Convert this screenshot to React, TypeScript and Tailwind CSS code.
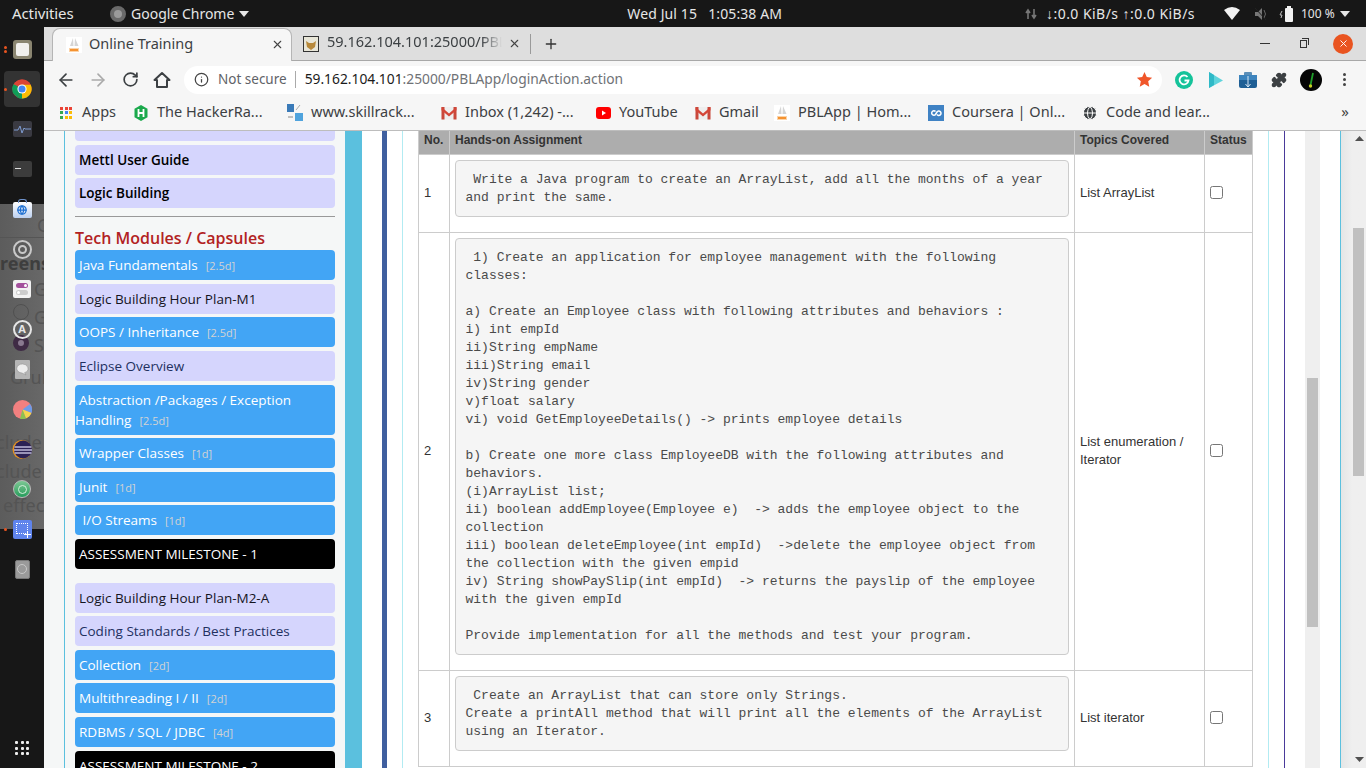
import { ArrowLeft, ArrowRight, RotateCw, Info, Puzzle, X, Plus, Globe } from "lucide-react";

const ui = "font-['Noto_Sans',sans-serif]";

function ChromeLogo({ size = 28 }: { size?: number }) {
  return (
    <svg width={size} height={size} viewBox="0 0 48 48">
      <circle cx="24" cy="24" r="23" fill="#db4437" />
      <path d="M24 24 L44 36 A23 23 0 0 1 14 44.7 Z" fill="#0f9d58" />
      <path d="M24 24 L4 12 A23 23 0 0 0 4 36 L14 44.7 Z" fill="#0f9d58" />
      <path d="M24 13 H44.5 A23 23 0 0 1 34 44.7 L24 47 Z" fill="#fbbc05" />
      <path d="M24 13 L4.5 13 A23 23 0 0 1 44.5 13 Z" fill="#db4437" />
      <circle cx="24" cy="24" r="11" fill="#fff" />
      <circle cx="24" cy="24" r="8.5" fill="#4285f4" />
    </svg>
  );
}

function PblIcon() {
  return (
    <svg width="16" height="16" viewBox="0 0 16 16">
      <rect width="16" height="16" fill="#fff" />
      <path d="M4 9 L7 1 L7.500 9 Z M8.500 9 L9 1 L12.500 9 Z" fill="#d5d5d5" />
      <rect x="3" y="11" width="10" height="4" fill="#fbd3a8" />
      <rect x="4" y="12" width="8" height="2" fill="#f59331" />
    </svg>
  );
}

function GmailIcon() {
  return (
    <svg width="16" height="14" viewBox="0 0 16 14">
      <rect x="0.5" y="1" width="15" height="12.5" fill="#eee" />
      <rect x="0.5" y="1" width="3" height="12.5" fill="#c9483b" />
      <rect x="12.5" y="1" width="3" height="12.5" fill="#c9483b" />
      <path d="M0.5 1 L8 7.5 L15.5 1 V4.2 L8 10.5 L0.5 4.2 Z" fill="#d44638" />
    </svg>
  );
}

function Bookmark({ icon, label, w }: { icon: React.ReactNode; label: string; w: string }) {
  return (
    <div className={`flex items-center ${w}`}>
      <span className="flex w-4 h-4 items-center justify-center shrink-0">{icon}</span>
      <span className="ml-2 -mt-[1px] text-[14.5px] text-[#3c4043] whitespace-nowrap">{label}</span>
    </div>
  );
}

function TopBar() {
  return (
    <div className={`flex items-center h-[27px] bg-[#171717] text-[#e6e6e6] text-[14px] ${ui} relative shrink-0`}>
      <span className="ml-3 w-[98px] text-[15px] tracking-[-0.1px]">Activities</span>
      <span className="w-[16px] h-[16px] rounded-full bg-[#9a9a9a] border-[4px] border-[#6a6a6a]" />
      <span className="ml-[5px]">Google Chrome</span>
      <svg width="10" height="6" viewBox="0 0 10 6" className="ml-[5px]"><path d="M0 0h10L5 6z" fill="#e6e6e6" /></svg>
      <span className="ml-[378px] whitespace-pre tracking-[0.1px]">Wed Jul 15   1:05:38 AM</span>
      <svg width="12" height="12" viewBox="0 0 12 12" className="ml-[243px]">
        <path d="M3 11V3M1 5l2-3 2 3M9 1v8M7 7l2 3 2-3" stroke="#777" strokeWidth="1.6" fill="none" />
      </svg>
      <span className="ml-[9px] text-[14px] tracking-[0.45px] whitespace-pre">↓:0.0 KiB/s ↑:0.0 KiB/s</span>
      <svg width="16" height="13" viewBox="0 0 16 13" className="ml-[29px]"><path d="M0 3 Q8 -3 16 3 L8 13z" fill="#f2f2f2" /></svg>
      <svg width="14" height="14" viewBox="0 0 14 14" className="ml-[14px]">
        <path d="M1 5h3l4-4v12l-4-4H1z" fill="#777" /><path d="M10 3q3 4 0 8" stroke="#666" fill="none" /><path d="M1 1l11 12" stroke="#222" />
      </svg>
      <svg width="18" height="18" viewBox="0 0 18 18" className="ml-[11px]">
        <path d="M3 6l-2 4h2l-1 3" stroke="#bbb" fill="none" />
        <rect x="6" y="3" width="8" height="14" rx="1" fill="#f2f2f2" />
        <rect x="8" y="1" width="4" height="2" fill="#f2f2f2" />
      </svg>
      <span className="ml-[4px] text-[12px]">100 %</span>
      <svg width="10" height="6" viewBox="0 0 10 6" className="ml-[5px]"><path d="M0 0h10L5 6z" fill="#e6e6e6" /></svg>
    </div>
  );
}

function Dock() {
  return (
    <div className="relative flex flex-col items-center w-[44px] shrink-0 bg-[#171717] pt-[2px] overflow-hidden">
      {/* window behind the translucent dock */}
      <div className={`absolute left-0 top-[177px] w-[44px] h-[325px] bg-gradient-to-r from-[#5c5c5c] to-[#686868] text-[#545454] text-[18px] overflow-hidden ${ui}`}>
        <div className="absolute left-0 top-[33px] w-[44px] h-px bg-[#555]" />
        <span className="absolute left-[37px] top-[8px]">G</span>
        <span className="absolute left-0 top-[46px] font-bold text-[#3e3e3e] whitespace-nowrap">reensh</span>
        <span className="absolute left-[34px] top-[72px]">G</span>
        <span className="absolute left-[13px] top-[100px] w-[16px] h-[16px] rounded-full border border-[#505050]" />
        <span className="absolute left-[34px] top-[100px]">G</span>
        <span className="absolute left-[13px] top-[131px] w-[16px] h-[16px] rounded-full bg-[#8a7a90] border-[5px] border-[#3f2b45]" />
        <span className="absolute left-[34px] top-[128px]">S</span>
        <span className="absolute left-[10px] top-[160px]">Grub</span>
        <span className="absolute left-[-4px] top-[225px] whitespace-nowrap">clude p</span>
        <span className="absolute left-[-4px] top-[254px] whitespace-nowrap">clude t</span>
        <span className="absolute left-[3px] top-[288px] whitespace-nowrap">effect</span>
      </div>
      <div className="relative flex flex-col items-center w-full h-full">
        <Slot dots={2}>
          <div className="w-[19px] h-[19px] rounded-[3px] bg-[#8a8570] p-[3px]"><div className="w-full h-full rounded-[2px] bg-[#f1f0ed]" /></div>
        </Slot>
        <Slot dots={1} active>
          <ChromeLogo size={20} />
        </Slot>
        <Slot>
          <div className="flex items-center justify-center w-[19px] h-[16px] rounded-[2px] bg-[#3a3a42]">
            <svg width="17" height="10" viewBox="0 0 17 10"><path d="M0 6h4l2-4 2 7 2-5 1 1h6" stroke="#7e9bd0" fill="none" /></svg>
          </div>
        </Slot>
        <Slot>
          <div className="w-[19px] h-[16px] rounded-[2px] bg-[#3c3c3c] pl-[2px] pt-[3px]"><div className="w-[6px] h-[5px] border-b border-[#ddd]" /></div>
        </Slot>
        <Slot>
          <div className="relative flex items-center justify-center w-[19px] h-[16px] mt-[2px] rounded-[2px] bg-gradient-to-b from-[#fff] to-[#bcd0f0]">
            <div className="absolute left-[5px] top-[-3px] w-[9px] h-[4px] rounded-t-[3px] border border-b-0 border-[#6f93cc]" />
            <Globe size={10} color="#1d6fd1" strokeWidth={3} />
          </div>
        </Slot>
        <Slot>
          <div className="flex items-center justify-center w-[19px] h-[19px] rounded-full border-2 border-[#c9c9c9] bg-[#5c5c5c]">
            <div className="w-[9px] h-[9px] rounded-full border-2 border-[#c9c9c9]" />
          </div>
        </Slot>
        <Slot>
          <div className="flex flex-col justify-center gap-[2px] w-[18px] h-[18px] rounded-[2px] bg-[#f2f2f2] px-[3px]">
            <div className="flex justify-end h-[5px] rounded-full bg-[#a3509c] p-px"><span className="w-[3px] h-[3px] rounded-full bg-white" /></div>
            <div className="flex h-[5px] rounded-full bg-[#ccc] p-px"><span className="w-[3px] h-[3px] rounded-full bg-white" /></div>
          </div>
        </Slot>
        <Slot>
          <div className="flex items-center justify-center w-[19px] h-[19px] rounded-full border-2 border-[#e6e6e6] text-[11px] font-bold text-[#e6e6e6] font-['Noto_Sans',sans-serif]">A</div>
        </Slot>
        <Slot>
          <div className="flex items-center justify-center w-[15px] h-[19px] rounded-[1px] bg-[#b5b5b5]">
            <svg width="13" height="13" viewBox="0 0 13 13"><path d="M6.500 1a5.500 4.500 0 0 1 2 8.700L10 12 6 10A5.500 4.500 0 0 1 6.500 1z" fill="#eee" stroke="#888" strokeWidth=".5" /></svg>
          </div>
        </Slot>
        <Slot>
          <svg width="19" height="19" viewBox="0 0 19 19">
            <circle cx="9.5" cy="9.5" r="9.5" fill="#f28080" />
            <path d="M9.5 9.5 L17 4 A9.5 9.5 0 0 1 18.5 13 Z" fill="#6f9be8" />
            <path d="M9.5 9.5 L18.5 13 A9.5 9.5 0 0 1 13 18.5 Z" fill="#f3d64e" />
            <path d="M9.5 9.5 L13 18.5 A9.5 9.5 0 0 1 7 18.7 Z" fill="#8cc152" />
          </svg>
        </Slot>
        <Slot>
          <svg width="21" height="19" viewBox="0 0 21 19">
            <circle cx="10" cy="9.5" r="9.5" fill="#e8951f" />
            <circle cx="11" cy="9.5" r="9" fill="#2c2255" />
            <path d="M2.5 6h17v2h-17zM2 9h18v2H2zM2.5 12h17v2h-17z" fill="#9a94b8" />
          </svg>
        </Slot>
        <Slot>
          <div className="flex items-center justify-center w-[18px] h-[18px] rounded-full bg-gradient-to-b from-[#7bc894] to-[#1f9d5c] border border-[#bbb]">
            <div className="w-[9px] h-[9px] rounded-full border border-[#d5efdc]" />
          </div>
        </Slot>
        <Slot dots={1}>
          <div className="relative w-[19px] h-[19px] rounded-[2px] bg-[#5f84ec] p-[3px]">
            <div className="w-[12px] h-[11px] border border-dotted border-white" />
            <svg width="7" height="7" viewBox="0 0 7 7" className="absolute right-[1px] bottom-[1px]"><path d="M3.500 0v7M0 3.500h7" stroke="#fff" /></svg>
          </div>
        </Slot>
        <Slot>
          <div className="flex items-center justify-center w-[15px] h-[19px] rounded-[2px] bg-[#9a9a9a] border border-[#777]">
            <div className="w-[10px] h-[10px] rounded-full border border-[#c8c8c8]" />
          </div>
        </Slot>
        <div className="mt-auto mb-[13px] grid grid-cols-3 gap-[2.5px]">
          {Array.from({ length: 9 }).map((_, i) => (
            <span key={i} className="w-[3px] h-[3px] bg-[#eee] rounded-[1px]" />
          ))}
        </div>
      </div>
    </div>
  );
}

function Slot({ children, dots = 0, active }: { children: React.ReactNode; dots?: number; active?: boolean }) {
  return (
    <div className="relative flex items-center justify-center w-full h-10 shrink-0">
      {active && <div className="absolute left-[4px] top-[2px] w-[36px] h-[36px] rounded-[4px] bg-[#333]" />}
      {dots > 0 && (
        <div className="absolute left-[4px] top-0 bottom-0 flex flex-col justify-center gap-[1px]">
          {Array.from({ length: dots }).map((_, i) => (
            <span key={i} className="w-[3px] h-[3px] rounded-full bg-[#e95420]" />
          ))}
        </div>
      )}
      <div className="relative">{children}</div>
    </div>
  );
}

function BrowserChrome() {
  return (
    <div className={`shrink-0 ${ui}`}>
      <div className="relative flex items-end h-[34px] bg-[#dedede] border-b border-[#a8a8a8] pl-[8px]">
        <div className="relative flex items-center w-[240px] h-[33px] -mb-px bg-[#f6f6f6] rounded-t-[8px] border border-b-0 border-[#b5b5b5] pl-[13px] pr-[7px]">
          <PblIcon />
          <span className="ml-[7px] -mt-[3px] text-[14.5px] text-[#3c4043] whitespace-nowrap">Online Training</span>
          <X size={13} color="#444" strokeWidth={2} className="ml-auto -mt-[1px]" />
        </div>
        <div className="flex items-center h-[33px] pl-[11px] flex-1">
          <div className="flex w-4 h-4 items-center justify-center bg-[#e8e6d8] border border-[#333]">
            <svg width="14" height="14" viewBox="0 0 14 14"><path d="M2 4l3 2h4l3-2-1 6-4 3-4-3z" fill="#b8893a" /></svg>
          </div>
          <span className="ml-[8px] -mt-[3px] w-[175px] overflow-hidden text-[14.5px] text-[#3c4043] whitespace-nowrap [mask-image:linear-gradient(to_right,black_88%,transparent)]">59.162.104.101:25000/PBL</span>
          <X size={13} color="#444" strokeWidth={2} className="ml-[6px]" />
          <span className="ml-[9px] w-px h-[20px] bg-[#9a9a9a]" />
          <Plus size={16} color="#333" strokeWidth={2} className="ml-[12px]" />
          <span className="ml-auto w-[10px] h-px bg-[#333]" />
          <span className="relative ml-[30px] w-[7px] h-[8px] border border-[#333]">
            <span className="absolute left-[1px] top-[-3px] w-[7px] h-[7px] border-t border-r border-[#333]" />
          </span>
          <span className="ml-[26px] mr-[13px] flex items-center justify-center w-[20px] h-[20px] rounded-full bg-[#e95420]">
            <X size={11} color="#fff" strokeWidth={2} />
          </span>
        </div>
      </div>
      <div className="flex items-center h-[37px] bg-[#f6f6f6] pl-3 pr-[11px]">
        <ArrowLeft size={20} color="#3c4043" strokeWidth={2} />
        <ArrowRight size={20} color="#aaa" strokeWidth={2} className="ml-[12px]" />
        <RotateCw size={17} color="#3c4043" strokeWidth={2.4} className="ml-[14px]" />
        <svg width="18" height="18" viewBox="0 0 18 18" className="ml-[14px]">
          <path d="M9 2 L16.5 9 H14 V16 H4 V9 H1.5 Z" fill="none" stroke="#3c4043" strokeWidth="2" strokeLinejoin="round" />
        </svg>
        <div className="flex items-center w-[978px] h-[28px] ml-[13px] rounded-full bg-white pl-[10px] pr-[10px]">
          <Info size={15} color="#444" strokeWidth={2} />
          <span className="ml-[9px] -mt-[1px] text-[13.5px] text-[#5f6368] whitespace-nowrap">Not secure</span>
          <span className="ml-[8px] w-px h-[17px] bg-[#aaa]" />
          <span className="ml-[9px] -mt-[1px] text-[13.8px] text-[#6f7276] whitespace-nowrap">
            <span className="text-[#1b1b1b]">59.162.104.101</span>:25000/PBLApp/loginAction.action
          </span>
          <svg width="17" height="17" viewBox="0 0 24 24" className="ml-auto mr-[-1px]">
            <path d="M12 1.5l3.2 7 7.6.9-5.6 5.200 1.5 7.600L12 18.400l-6.700 3.800 1.500-7.600L1.200 9.400l7.600-.9z" fill="#f0562a" />
          </svg>
        </div>
        <svg width="18" height="18" viewBox="0 0 18 18" className="ml-[13px]">
          <circle cx="9" cy="9" r="9" fill="#15c39a" />
          <path d="M12.5 6 A4.5 4.5 0 1 0 13.5 9.5 H9.5" fill="none" stroke="#fff" strokeWidth="1.8" />
        </svg>
        <svg width="16" height="18" viewBox="0 0 16 18" className="ml-[15px]">
          <path d="M1 1 L15 9.5 L1 17z" fill="#5fd4dc" /><path d="M1 1 L6 4 V14 L1 17z" fill="#2fb9c7" />
        </svg>
        <svg width="18" height="16" viewBox="0 0 18 16" className="ml-[15px]">
          <rect x="0" y="3" width="18" height="13" rx="2" fill="#1f5f95" />
          <rect x="5" y="0" width="8" height="4" rx="1" fill="#5c8fb8" />
          <rect x="0" y="3" width="18" height="5" fill="#3d84bd" />
          <path d="M9 4v11M6.500 12L9 15l2.500-3" stroke="#d8e8f5" fill="none" />
        </svg>
        <Puzzle size={16} color="#3c4043" fill="#3c4043" className="ml-[14px]" />
        <span className="relative ml-[13px] w-[22px] h-[22px] rounded-full bg-[#050505]">
          <svg width="22" height="22" viewBox="0 0 22 22">
            <path d="M13 4 L10.5 16" stroke="#1f9d2a" strokeWidth="1.8" />
            <circle cx="10.5" cy="17" r="1.7" fill="#c6cf22" />
          </svg>
        </span>
        <span className="ml-[21px] flex flex-col gap-[2px]">
          <span className="w-[3px] h-[3px] rounded-full bg-[#444]" />
          <span className="w-[3px] h-[3px] rounded-full bg-[#444]" />
          <span className="w-[3px] h-[3px] rounded-full bg-[#444]" />
        </span>
      </div>
      <div className="flex items-center h-[33px] bg-[#f6f6f6] border-b border-[#bdbdbd] pl-[14px] pr-[17px] pb-[3px]">
        <Bookmark
          w="w-[75px]"
          label="Apps"
          icon={
            <span className="grid grid-cols-3 gap-[1.5px]">
              {["bg-[#ea4335]", "bg-[#ea4335]", "bg-[#ea4335]", "bg-[#34a853]", "bg-[#4285f4]", "bg-[#fbbc05]", "bg-[#34a853]", "bg-[#fbbc05]", "bg-[#fbbc05]"].map((c, i) => (
                <span key={i} className={`w-[3px] h-[3px] ${c}`} />
              ))}
            </span>
          }
        />
        <Bookmark
          w="w-[154px]"
          label="The HackerRa..."
          icon={
            <svg width="14" height="16" viewBox="0 0 14 16"><path d="M7 0 L13.5 3.800 V12.200 L7 16 L.5 12.200 V3.800Z" fill="#1ba94c" /><path d="M4.500 4v8M9.500 4v8M4.500 8h5" stroke="#fff" strokeWidth="1.8" /></svg>
          }
        />
        <Bookmark
          w="w-[154px]"
          label="www.skillrack..."
          icon={
            <svg width="16" height="18" viewBox="0 0 16 18"><rect x="0" y="0" width="7" height="8" fill="#3a7ab8" /><rect x="8" y="9" width="8" height="8" fill="#4fa3dd" /><path d="M9 6l4-5" stroke="#aaa" /><path d="M1 13h5" stroke="#888" /></svg>
          }
        />
        <Bookmark w="w-[154px]" label="Inbox (1,242) -..." icon={<GmailIcon />} />
        <Bookmark
          w="w-[100px]"
          label="YouTube"
          icon={
            <svg width="15" height="12" viewBox="0 0 15 12"><rect width="15" height="12" rx="3" fill="#f00" /><path d="M6 3.500v5l4-2.500z" fill="#fff" /></svg>
          }
        />
        <Bookmark w="w-[79px]" label="Gmail" icon={<GmailIcon />} />
        <Bookmark w="w-[154px]" label="PBLApp | Hom..." icon={<PblIcon />} />
        <Bookmark
          w="w-[154px]"
          label="Coursera | Onl..."
          icon={
            <svg width="16" height="16" viewBox="0 0 16 16"><rect width="16" height="16" fill="#3f82c4" /><path d="M7.500 6.500 A2.200 2.200 0 1 0 7.500 9.500 L9 7 A2.200 2.200 0 1 1 9 9.500" fill="none" stroke="#fff" strokeWidth="1.5" /></svg>
          }
        />
        <Bookmark w="w-[100px]" label="Code and lear..." icon={<Globe size={16} color="#fff" fill="#3c4043" strokeWidth={1.5} />} />
        <span className="ml-auto text-[15px] text-[#444] -mt-[2px]">»</span>
      </div>
    </div>
  );
}

type MenuItem = { label: string; days?: string; kind: "light" | "blue" | "black"; gap: string; strong?: boolean; dark?: boolean };

const menuTop: MenuItem[] = [
  { label: "Mettl User Guide", kind: "light", gap: "mt-1", strong: true },
  { label: "Logic Building", kind: "light", gap: "mt-[3px]", strong: true },
];

const menuMain: MenuItem[] = [
  { label: "Java Fundamentals", days: "[2.5d]", kind: "blue", gap: "mt-0" },
  { label: "Logic Building Hour Plan-M1", kind: "light", gap: "mt-1", dark: true },
  { label: "OOPS / Inheritance", days: "[2.5d]", kind: "blue", gap: "mt-[3px]" },
  { label: "Eclipse Overview", kind: "light", gap: "mt-1" },
  { label: "Abstraction /Packages / Exception Handling", days: "[2.5d]", kind: "blue", gap: "mt-1" },
  { label: "Wrapper Classes", days: "[1d]", kind: "blue", gap: "mt-[3px]" },
  { label: "Junit", days: "[1d]", kind: "blue", gap: "mt-1" },
  { label: "\u00a0I/O Streams", days: "[1d]", kind: "blue", gap: "mt-[3px]" },
  { label: "ASSESSMENT MILESTONE - 1", kind: "black", gap: "mt-1" },
  { label: "Logic Building Hour Plan-M2-A", kind: "light", gap: "mt-[14px]", dark: true },
  { label: "Coding Standards / Best Practices", kind: "light", gap: "mt-[3px]" },
  { label: "Collection", days: "[2d]", kind: "blue", gap: "mt-1" },
  { label: "Multithreading I / II", days: "[2d]", kind: "blue", gap: "mt-[3px]" },
  { label: "RDBMS / SQL / JDBC", days: "[4d]", kind: "blue", gap: "mt-1" },
  { label: "ASSESSMENT MILESTONE - 2", kind: "black", gap: "mt-1" },
];

function MenuRow({ item }: { item: MenuItem }) {
  const tone =
    item.kind === "blue"
      ? "bg-[#42a5f5] text-white"
      : item.kind === "black"
        ? "bg-black text-white"
        : item.strong
          ? "bg-[#d5d5fd] text-black font-semibold"
          : item.dark
            ? "bg-[#d5d5fd] text-[#14141e]"
            : "bg-[#d5d5fd] text-[#22305f]";
  return (
    <div className={`${item.gap} shrink-0 rounded-[4px] py-[5px] leading-[20px] text-[13.5px] indent-1 ${tone}`}>
      {item.label}
      {item.days && <span className="ml-2 text-[11px] leading-[1] text-[#d3d3d3]">{item.days}</span>}
    </div>
  );
}

function Sidebar() {
  return (
    <aside className="flex flex-col w-[281px] shrink-0 border-l border-[#5bc0de] bg-[#f5f7f7] px-[10px] font-['Open_Sans',sans-serif]">
      <div className="h-[10px] shrink-0 rounded-b-[4px] bg-[#d5d5fd]" />
      {menuTop.map((m) => (
        <MenuRow key={m.label} item={m} />
      ))}
      <hr className="mt-2 shrink-0 border-t border-[#999]" />
      <h2 className="mt-[10px] shrink-0 text-[16px] leading-[23px] font-semibold text-[#b22222]">Tech Modules / Capsules</h2>
      {menuMain.map((m) => (
        <MenuRow key={m.label} item={m} />
      ))}
    </aside>
  );
}

const task2 = ` 1) Create an application for employee management with the following classes:

a) Create an Employee class with following attributes and behaviors :
i) int empId
ii)String empName
iii)String email
iv)String gender
v)float salary
vi) void GetEmployeeDetails() -> prints employee details

b) Create one more class EmployeeDB with the following attributes and behaviors.
(i)ArrayList list;
ii) boolean addEmployee(Employee e)  -> adds the employee object to the collection
iii) boolean deleteEmployee(int empId)  ->delete the employee object from the collection with the given empid
iv) String showPaySlip(int empId)  -> returns the payslip of the employee with the given empId

Provide implementation for all the methods and test your program.`;

const rows = [
  { no: "1", text: " Write a Java program to create an ArrayList, add all the months of a year and print the same.", topic: "List ArrayList" },
  { no: "2", text: task2, topic: "List enumeration / Iterator" },
  {
    no: "3",
    text: " Create an ArrayList that can store only Strings.\nCreate a printAll method that will print all the elements of the ArrayList using an Iterator.",
    topic: "List iterator",
  },
];

function Assignments() {
  return (
    <table className="w-[834px] h-fit table-fixed border-collapse font-['Liberation_Sans',Arial,sans-serif] text-[13px] leading-[18px] text-[#333]">
      <colgroup>
        <col className="w-[31px]" />
        <col className="w-[625px]" />
        <col className="w-[130px]" />
        <col className="w-[48px]" />
      </colgroup>
      <thead>
        <tr className="h-[23px] bg-[#adadad] text-left text-[12px] font-bold">
          {["No.", "Hands-on Assignment", "Topics Covered", "Status"].map((h) => (
            <th key={h} className="border border-[#ccc] border-t-0 px-[5px] pb-[4px]">
              {h}
            </th>
          ))}
        </tr>
      </thead>
      <tbody>
        {rows.map((r) => (
          <tr key={r.no}>
            <td className="border border-[#ccc] px-[5px] align-middle">{r.no}</td>
            <td className="border border-[#ccc] p-[5px]">
              <pre className="mb-[10px] rounded-[4px] border border-[#ccc] bg-[#f5f5f5] pt-[10px] pb-[9px] px-[9.5px] font-['Liberation_Mono','Courier_New',monospace] text-[13px] leading-[18px] text-[#4a4a4a] whitespace-pre-wrap break-words">
                {r.text}
              </pre>
            </td>
            <td className="border border-[#ccc] px-[5px] align-middle">{r.topic}</td>
            <td className="border border-[#ccc] px-[5px] align-middle">
              <input type="checkbox" className="block mb-[2px]" />
            </td>
          </tr>
        ))}
      </tbody>
    </table>
  );
}

function Content() {
  return (
    <div className="flex flex-1 min-w-0 bg-white">
      <div className="w-[17px] shrink-0 bg-[#5bc0de]" />
      <div className="w-[20px] shrink-0" />
      <div className="w-[5px] shrink-0 bg-[#3f5f9f]" />
      <div className="w-[15px] shrink-0" />
      <div className="flex w-[867px] shrink-0 border-x border-[#b2ebf2] pl-[15px]">
        <Assignments />
      </div>
      <div className="w-[16px] shrink-0 border-r border-[#4a3a9a]" />
      <div className="w-[20px] shrink-0" />
      <div className="flex w-[15px] shrink-0 flex-col bg-[#efefef] pt-[247px]">
        <div className="mx-[2px] h-[249px] bg-[#c0c0c0]" />
      </div>
      <div className="w-[21px] shrink-0 border-r border-[#5bc0de]" />
      <div className="relative flex flex-1 bg-gradient-to-r from-[#e4e6e6] to-[#efefef] to-[45%]">
        <div className="absolute right-[2px] top-[97px] h-[248px] w-[11px] bg-[#c0c0c0]" />
        <svg width="9" height="5" viewBox="0 0 9 5" className="absolute right-[2px] top-[5px]"><path d="M0 5h9L4.500 0z" fill="#505050" /></svg>
        <svg width="9" height="5" viewBox="0 0 9 5" className="absolute right-[2px] bottom-[6px]"><path d="M0 0h9L4.500 5z" fill="#505050" /></svg>
      </div>
    </div>
  );
}

export default function App() {
  return (
    <div className="flex flex-col w-[1366px] h-[768px] overflow-hidden bg-white">
      <TopBar />
      <div className="flex flex-1 min-h-0">
        <Dock />
        <div className="flex flex-col flex-1 min-w-0">
          <BrowserChrome />
          <div className="flex flex-1 min-h-0 overflow-hidden">
            <div className="w-[20px] shrink-0 bg-[#f5f7f7]" />
            <Sidebar />
            <Content />
          </div>
        </div>
      </div>
    </div>
  );
}
